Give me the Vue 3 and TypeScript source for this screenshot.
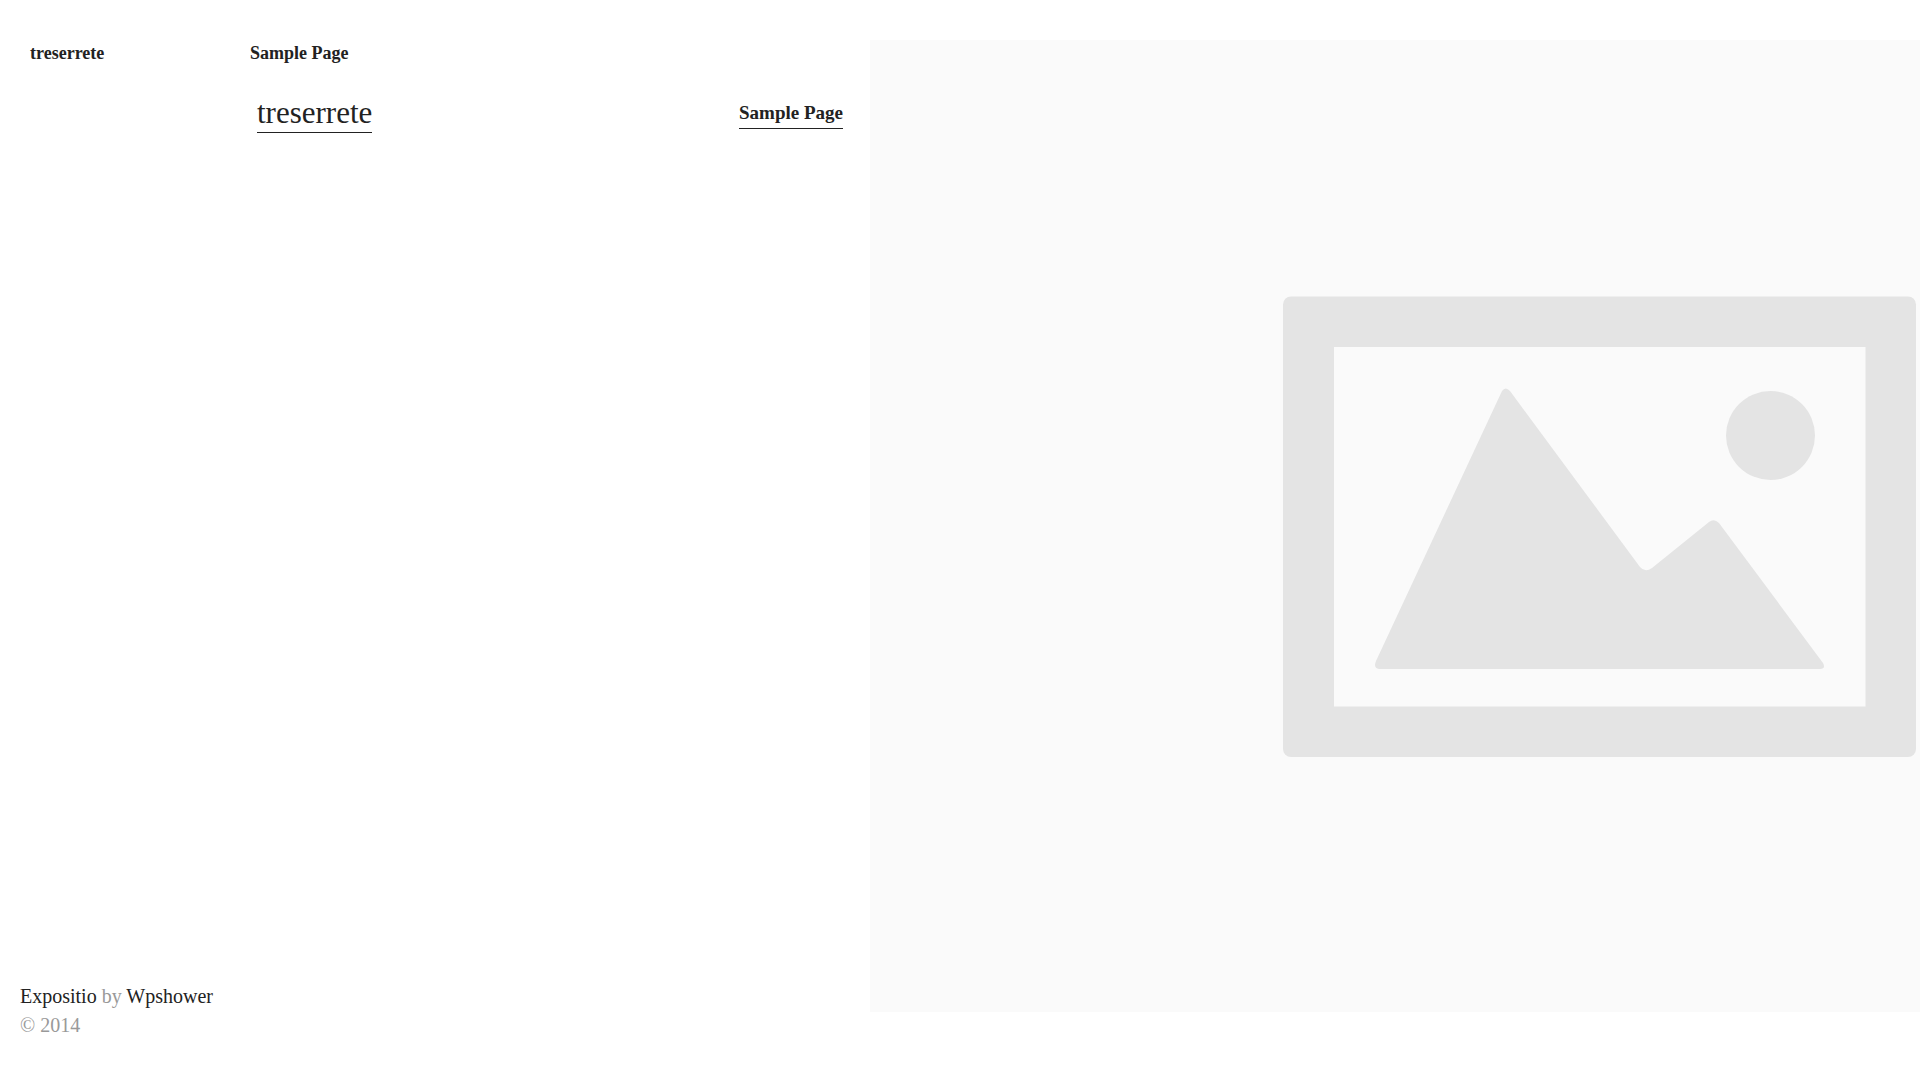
<script setup lang="ts">
interface MenuLink {
  label: string
  href: string
}

const siteName = 'treserrete'
const menu: MenuLink[] = [{ label: 'Sample Page', href: '#sample-page' }]
</script>

<template>
  <div class="page">
    <div class="side">
      <header class="topbar">
        <a class="brand" href="#">{{ siteName }}</a>
        <nav aria-label="Top">
          <a v-for="item in menu" :key="item.href" :href="item.href">{{ item.label }}</a>
        </nav>
      </header>

      <div class="masthead">
        <h1><a href="#">{{ siteName }}</a></h1>
        <nav aria-label="Main">
          <a v-for="item in menu" :key="item.href" :href="item.href">{{ item.label }}</a>
        </nav>
      </div>

      <footer class="credits">
        <p><a href="#expositio">Expositio</a> by <a href="#wpshower">Wpshower</a></p>
        <p>© 2014</p>
      </footer>
    </div>

    <main class="gallery">
      <svg class="placeholder" viewBox="0 0 1458 972" role="img" aria-label="Image placeholder">
        <rect width="1458" height="972" fill="#fafafa" />
        <rect x="413" y="256.500" width="633" height="460.500" rx="8" fill="#e4e4e4" />
        <rect x="464" y="307" width="531.500" height="359.500" fill="#fafafa" />
        <circle cx="900.5" cy="395.500" r="44.5" fill="#e4e4e4" />
        <path
          fill="#e4e4e4"
          d="M632 351 Q635.500 346 640 351 L770 527 Q775 533 782 528 L839 482 Q844 478 849 483 L953 623 Q956 629 950 629 L509 629 Q503 628 506 621 Z"
        />
      </svg>
    </main>
  </div>
</template>

<style>
body {
  background: #fff;
  overflow: hidden;
}
</style>

<style scoped>
.page {
  display: grid;
  grid-template-columns: minmax(0, 29fr) minmax(0, 35fr);
  min-height: 100vh;
  color: #222;
  font-family: "Liberation Serif", "Times New Roman", serif;
}

a {
  color: #222;
  text-decoration: none;
}

.side {
  display: flex;
  flex-direction: column;
  padding: 40px 0;
}

.topbar {
  display: flex;
  padding-left: 30px;
  font-size: 18px;
  font-weight: 700;
  line-height: 26px;
}

.brand {
  flex: 0 0 220px;
}

.masthead {
  display: flex;
  justify-content: space-between;
  align-items: center;
  margin-top: 28px;
  padding: 0 27px 0 257px;
}

h1 {
  margin: 0;
  font-size: 31px;
  font-weight: 400;
  line-height: 38px;
}

.masthead a {
  display: block;
  border-bottom: 1px solid #222;
}

.masthead nav a {
  font-size: 19px;
  font-weight: 700;
  line-height: 30px;
}

.credits {
  margin-top: auto;
  padding-left: 20px;
  color: #999;
  font-size: 20px;
  line-height: 29px;
}

.credits p {
  margin: 0;
}

.gallery {
  height: calc(100vh - 108px);
  margin-top: 40px;
  overflow: hidden;
}

.placeholder {
  display: block;
  height: 100%;
  aspect-ratio: 3 / 2;
}
</style>
